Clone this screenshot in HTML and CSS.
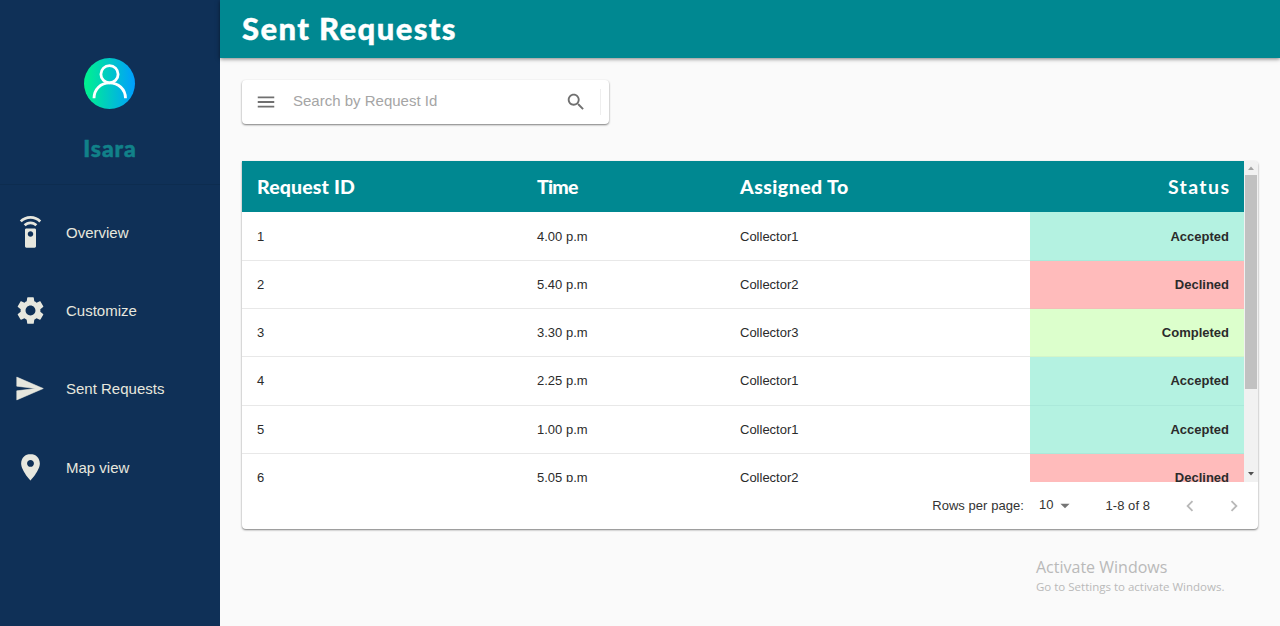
FILE: index.html
```html
<!DOCTYPE html>
<html lang="en">
<head>
<meta charset="utf-8">
<title>Sent Requests</title>
<link rel="stylesheet" href="styles.css">
</head>
<body>
<div class="app">
  <aside class="sidebar">
    <div class="profile">
      <svg class="avatar" viewBox="0 0 52 52">
        <defs><linearGradient id="avatar-fill"><stop offset="0" stop-color="#00f38d"/><stop offset="1" stop-color="#009eff"/></linearGradient></defs>
        <circle cx="25.500" cy="26.500" r="25.500" fill="url(#avatar-fill)"/>
        <g fill="none" stroke="#fff" stroke-width="2.800"><circle cx="25.500" cy="17.200" r="8.600"/><path d="M10 41.300C10 32.100 16.800 25.900 25.500 25.900S41.500 32.100 41.500 41.300"/></g>
      </svg>
      <div class="username"><span>Isara</span></div>
    </div>
    <nav class="nav">
      <a class="nav-item"><svg class="nav-icon" viewBox="0 0 24 24"><path d="M15 9H9c-.55 0-1 .45-1 1v12c0 .55.45 1 1 1h6c.55 0 1-.45 1-1V10c0-.55-.45-1-1-1zm-3 6c-1.100 0-2-.9-2-2s.9-2 2-2 2 .9 2 2-.9 2-2 2zM7.050 6.050l1.410 1.410C9.370 6.560 10.620 6 12 6s2.630.56 3.540 1.460l1.410-1.410C15.680 4.780 13.930 4 12 4s-3.680.78-4.950 2.050zM12 0C8.960 0 6.210 1.230 4.220 3.220l1.410 1.410C7.260 3.010 9.510 2 12 2s4.740 1.010 6.360 2.640l1.410-1.410C17.790 1.230 15.040 0 12 0z"/></svg><span>Overview</span></a>
      <a class="nav-item"><svg class="nav-icon" viewBox="0 0 24 24"><path d="M19.140 12.940c.04-.3.06-.61.06-.94 0-.32-.02-.64-.07-.94l2.030-1.580c.18-.14.23-.41.12-.61l-1.920-3.320c-.12-.22-.37-.29-.59-.22l-2.390.96c-.5-.38-1.030-.7-1.620-.94l-.36-2.540c-.04-.24-.24-.41-.48-.41h-3.840c-.24 0-.43.17-.47.41l-.36 2.540c-.59.24-1.130.57-1.620.94l-2.390-.96c-.22-.08-.47 0-.59.22L2.740 8.870c-.12.21-.08.47.12.61l2.030 1.580c-.05.3-.09.63-.09.94s.02.64.07.94l-2.030 1.580c-.18.14-.23.41-.12.61l1.920 3.320c.12.22.37.29.59.22l2.390-.96c.5.38 1.030.7 1.620.94l.36 2.540c.05.24.24.41.48.41h3.840c.24 0 .44-.17.47-.41l.36-2.540c.59-.24 1.130-.56 1.620-.94l2.390.96c.22.08.47 0 .59-.22l1.920-3.320c.12-.22.07-.47-.12-.61l-2.010-1.580zM12 15.600c-1.980 0-3.600-1.620-3.600-3.600s1.620-3.600 3.600-3.600 3.600 1.620 3.600 3.600-1.620 3.600-3.600 3.600z"/></svg><span>Customize</span></a>
      <a class="nav-item"><svg class="nav-icon" viewBox="0 0 24 24"><path d="M2.010 20.300L21.300 12 2.010 3.700 2 10.300l13.500 1.700L2 13.700z" stroke="#e7e7de" stroke-width=".4" stroke-linejoin="round"/></svg><span>Sent Requests</span></a>
      <a class="nav-item"><svg class="nav-icon" viewBox="0 0 24 24"><path d="M12 2.200C8.130 2.200 5.200 5.130 5.200 9c0 5.100 6.800 12.400 6.800 12.400s6.800-7.300 6.800-12.400c0-3.870-2.930-6.800-6.800-6.800zm0 9.300c-1.380 0-2.500-1.120-2.500-2.500s1.120-2.500 2.500-2.500 2.500 1.120 2.500 2.500-1.120 2.500-2.500 2.500z"/></svg><span>Map view</span></a>
    </nav>
  </aside>
  <div class="page">
    <header class="topbar"><h1>Sent Requests</h1></header>
    <main class="content">
      <div class="search">
        <svg class="search-icon" viewBox="0 0 24 24"><path d="M3 18h18v-2H3v2zm0-5h18v-2H3v2zm0-7v2h18V6H3z"/></svg>
        <span class="placeholder">Search by Request Id</span>
        <svg class="search-icon" viewBox="0 0 24 24"><path d="M15.500 14h-.79l-.28-.27C15.410 12.590 16 11.110 16 9.500 16 5.910 13.090 3 9.500 3S3 5.910 3 9.500 5.910 16 9.500 16c1.610 0 3.090-.59 4.230-1.570l.27.28v.79l5 4.990L20.490 19l-4.990-5zm-6 0C7.010 14 5 11.990 5 9.500S7.010 5 9.500 5 14 7.010 14 9.500 11.990 14 9.500 14z"/></svg>
        <i class="search-divider"></i>
      </div>
      <section class="card">
        <div class="viewport">
          <div class="table">
            <div class="row head"><div><span class="h-id">Request ID</span></div><div><span class="h-time">Time</span></div><div><span class="h-to">Assigned To</span></div><div><span class="h-status">Status</span></div></div>
            <div class="row"><div>1</div><div>4.00 p.m</div><div>Collector1</div><div class="accepted">Accepted</div></div>
            <div class="row"><div>2</div><div>5.40 p.m</div><div>Collector2</div><div class="declined">Declined</div></div>
            <div class="row"><div>3</div><div>3.30 p.m</div><div>Collector3</div><div class="completed">Completed</div></div>
            <div class="row"><div>4</div><div>2.25 p.m</div><div>Collector1</div><div class="accepted">Accepted</div></div>
            <div class="row"><div>5</div><div>1.00 p.m</div><div>Collector1</div><div class="accepted">Accepted</div></div>
            <div class="row"><div>6</div><div>5.05 p.m</div><div>Collector2</div><div class="declined">Declined</div></div>
          </div>
          <div class="scrollbar">
            <svg class="arrow up" viewBox="0 0 14 14"><path d="M4 9l3-3.500L10 9z"/></svg>
            <div class="thumb"></div>
            <svg class="arrow down" viewBox="0 0 14 14"><path d="M4 4l3 3.500L10 4z"/></svg>
          </div>
        </div>
        <footer class="pager">
          <span class="pager-label">Rows per page:</span>
          <span class="pager-size">10</span>
          <svg class="caret" viewBox="0 0 24 24"><path d="M7 9.500l5 5 5-5z"/></svg>
          <span class="pager-range">1-8 of 8</span>
          <svg class="chevron" viewBox="0 0 24 24"><path d="M15.410 7.410L14 6l-6 6 6 6 1.410-1.410L10.830 12z"/></svg>
          <svg class="chevron" viewBox="0 0 24 24"><path d="M10 6L8.590 7.410 13.170 12l-4.580 4.590L10 18l6-6z"/></svg>
        </footer>
      </section>
    </main>
  </div>
  <div class="watermark"><div class="wm-title">Activate Windows</div><div class="wm-text">Go to Settings to activate Windows.</div></div>
</div>
</body>
</html>
```
FILE: styles.css
```css
* { box-sizing: border-box; }
body { margin: 0; background: #fafafa; font-family: "Liberation Sans", Arial, sans-serif; color: #2b2b2b; }
svg { display: block; flex: none; }
.app { display: flex; width: 1280px; height: 626px; overflow: hidden; position: relative; }

.sidebar { width: 220px; flex: none; background: #0f3057; }
.profile { height: 185px; padding-top: 57px; border-bottom: 1px solid #0d2c4f; display: flex; flex-direction: column; align-items: center; }
.avatar { width: 52px; height: 52px; }
.username { margin-top: 25px; font: 900 23px/28px Lato, sans-serif; color: #118189; letter-spacing: .9px; -webkit-text-stroke: .5px #118189; }
.nav { padding-top: 8px; }
.nav-item { display: flex; align-items: center; height: 78.3px; padding-left: 14px; gap: 19px; font-size: 15px; line-height: 20px; color: #e7e7de; }
.nav-item span { padding-top: 1px; }
.nav-icon { width: 33px; height: 33px; fill: #e7e7de; }

.page { flex: 1; min-width: 0; }
.topbar { height: 58px; background: #008891; box-shadow: 0 1px 4px rgba(0,0,0,.5); padding-left: 22px; }
h1 { margin: 0; font: 900 31px/56px Lato, sans-serif; color: #fff; letter-spacing: 1.4px; white-space: nowrap; -webkit-text-stroke: .4px #fff; }
.content { padding: 22px 22px 0; }

.search { width: 367px; height: 44px; display: flex; align-items: center; padding: 0 8px 0 13px; background: #fff; border-radius: 4px; box-shadow: 0 1px 2px rgba(0,0,0,.5); }
.search-icon { width: 22px; height: 22px; fill: #707070; }
.placeholder { flex: 1; padding-left: 16px; font-size: 15px; line-height: 20px; color: #a5a5a5; margin-top: -2px; }
.search-divider { width: 1px; height: 26px; margin-left: 13px; background: #eee; }

.card { margin-top: 37px; width: 1016px; height: 368px; background: #fff; border-radius: 0 4px 4px 4px; box-shadow: 0 1px 2px rgba(0,0,0,.5); overflow: hidden; }
.viewport { display: flex; height: 321px; overflow: hidden; }
.table { width: 1002px; flex: none; }
.row { display: grid; grid-template-columns: 280px 203px 305px 214px; height: 48.2px; font-size: 13px; letter-spacing: 0; }
.row > div { padding: 0 15px; display: flex; align-items: center; border-bottom: 1px solid #e8e8e8; }
.row > div:last-child { justify-content: flex-end; font-weight: bold; }
.row > .accepted { background: #b4f2e1; border-bottom-color: #abe9da; }
.row > .declined { background: #ffbbbb; border-bottom-color: #f5bcb8; }
.row > .completed { background: #dcffcc; border-bottom-color: #d4f5c8; }
.row.head { height: 51px; background: #008891; color: #fff; font: 900 19.5px/24px Lato, sans-serif; }
.row.head + .row { height: 49px; }
.row.head > div { border-bottom: 0; white-space: nowrap; letter-spacing: 0; }
.h-id { letter-spacing: .15px; }
.h-time { letter-spacing: -.7px; }
.h-to { letter-spacing: .45px; }
.h-status { letter-spacing: 1.4px; margin-right: -1.4px; }
.scrollbar { width: 14px; background: #f1f1f1; display: flex; flex-direction: column; }
.arrow { width: 14px; height: 14px; }
.up { fill: #a3a3a3; }
.down { fill: #505050; margin-top: auto; }
.thumb { height: 214px; margin: 0 1px; background: #c1c1c1; }

.pager { height: 47px; display: flex; align-items: center; padding-right: 13px; justify-content: flex-end; font-size: 13px; letter-spacing: .05px; color: #333; white-space: nowrap; }
.pager-size { margin: -2px 0 0 15px; }
.caret { width: 22px; height: 22px; fill: #757575; }
.pager-range { margin: 0 29px 0 30px; }
.chevron { width: 22px; height: 22px; fill: #b8b8b8; }
.chevron + .chevron { margin-left: 22px; }

.watermark { position: absolute; left: 1036px; top: 556px; font-family: "Open Sans", sans-serif; color: #b9b9b9; white-space: nowrap; }
.wm-title { font-size: 16px; line-height: 22px; }
.wm-text { font-size: 11.5px; line-height: 17px; }
```
